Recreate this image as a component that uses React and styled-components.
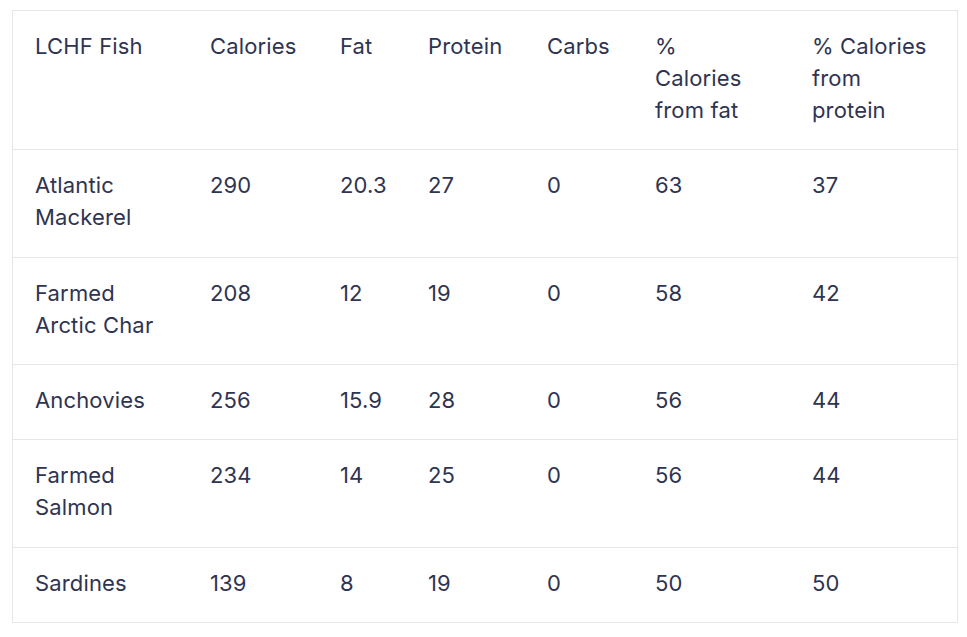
import React from "react";
import styled, { createGlobalStyle } from "styled-components";

const Global = createGlobalStyle`
  html, body { margin: 0; padding: 0; background: #ffffff; }
  body { font-family: Inter, "Noto Sans", sans-serif; }
`;

const Page = styled.div`
  padding: 10px 0 0 12px;
`;

const Table = styled.table`
  width: 946px;
  table-layout: fixed;
  border-collapse: separate;
  border-spacing: 0;
  border: 1px solid #e6e6e8;
  font-family: Inter, "Noto Sans", sans-serif;
  font-size: 22px;
  line-height: 32px;
  letter-spacing: 0.15px;
  color: #2f3451;
`;

const Cell = styled.td`
  padding: 19px 22px ${(p) => (p.$tall ? "23.5px" : "23px")};
  vertical-align: top;
  text-align: left;
  font-weight: 400;
  white-space: pre-line;
  border-bottom: ${(p) => (p.$last ? "none" : "1px solid #e6e6e8")};
`;

const Head = styled(Cell).attrs({ as: "th" })``;

const widths = [175, 130, 88, 119, 108, 157, 167];
const headers = ["LCHF Fish", "Calories", "Fat", "Protein", "Carbs", "%\nCalories\nfrom fat", "% Calories\nfrom\nprotein"];
const rows = [
  ["Atlantic\nMackerel", "290", "20.3", "27", "0", "63", "37"],
  ["Farmed\nArctic Char", "208", "12", "19", "0", "58", "42"],
  ["Anchovies", "256", "15.9", "28", "0", "56", "44"],
  ["Farmed\nSalmon", "234", "14", "25", "0", "56", "44"],
  ["Sardines", "139", "8", "19", "0", "50", "50"],
];

export default function App() {
  return (
    <Page>
      <Global />
      <Table>
        <colgroup>
          {widths.map((w, i) => (
            <col key={i} style={{ width: w }} />
          ))}
        </colgroup>
        <thead>
          <tr>
            {headers.map((h) => (
              <Head key={h}>{h}</Head>
            ))}
          </tr>
        </thead>
        <tbody>
          {rows.map((r, ri) => {
            const tall = r[0].includes("\n");
            return (
              <tr key={ri}>
                {r.map((c, ci) => (
                  <Cell key={ci} $tall={tall} $last={ri === rows.length - 1}>
                    {c}
                  </Cell>
                ))}
              </tr>
            );
          })}
        </tbody>
      </Table>
    </Page>
  );
}
